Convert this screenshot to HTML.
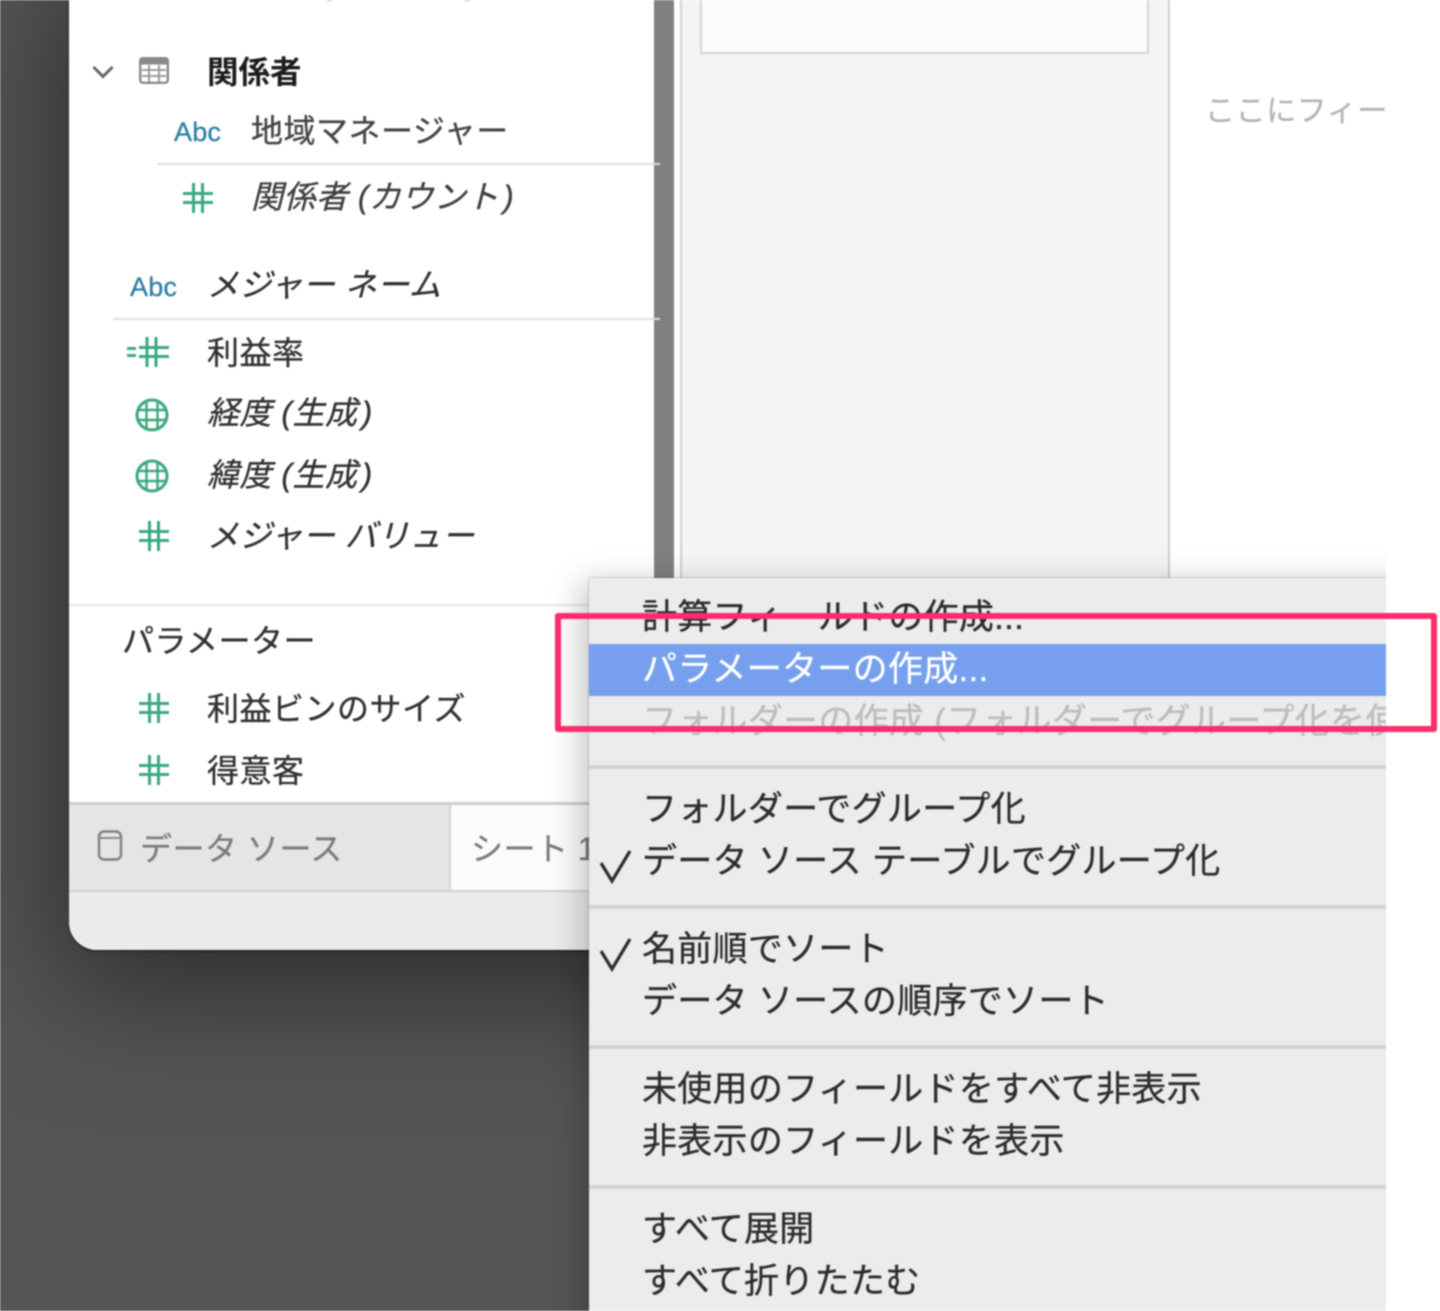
<!DOCTYPE html>
<html lang="ja"><head><meta charset="utf-8"><title>パラメーターの作成</title>
<style>
html,body{margin:0;padding:0;width:1440px;height:1311px;overflow:hidden;background:#fff}
#s{position:absolute;left:0;top:0;width:1440px;height:1311px;overflow:hidden;background:#555;filter:blur(.7px);font-family:"Liberation Sans","Noto Sans CJK JP",sans-serif}
.a{position:absolute}
.t{position:absolute;white-space:nowrap;height:44px;line-height:44px;font-size:32px;letter-spacing:.5px;color:#303030;-webkit-text-stroke:.3px currentColor}
.i{font-style:italic}
.i span{margin-left:4px}
.m{font-size:35px;letter-spacing:.28px;color:#2c2c2c;height:50px;line-height:50px;left:642px}
.sep{position:absolute;left:589px;width:797px;height:4px;background:#d2d2d2}
svg{position:absolute;overflow:visible}
</style></head><body>
<div id="s">
<div class="a" style="left:0;top:0;width:1440px;height:1311px;background:#555"></div>
<div class="a" style="left:69px;top:-40px;width:800px;height:990px;border-radius:0 0 0 28px;background:#fff;box-shadow:0 30px 160px 6px rgba(0,0,0,.5),0 1px 2px rgba(0,0,0,.7)"></div>
<div class="a" style="left:69px;top:0;width:1371px;height:802px;background:#fff"></div>
<div class="a" style="left:327px;top:0;width:5px;height:1px;background:#bbb"></div>
<div class="a" style="left:465px;top:0;width:5px;height:1px;background:#bbb"></div>

<div class="a" style="left:654px;top:0;width:20px;height:600px;background:#808080"></div>
<div class="a" style="left:680px;top:-2px;width:486px;height:600px;background:#f4f4f4;border:solid #cfcfcf;border-width:0 2px"></div>
<div class="a" style="left:700px;top:-2px;width:445px;height:52px;background:#fbfbfb;border:2px solid #d6d6d6"></div>
<div class="a" style="left:1190px;top:80px;width:196px;height:60px;overflow:hidden"><div class="t" style="left:15px;top:10px;font-size:30px;letter-spacing:.6px;color:#b4b4b4">ここにフィー</div></div>

<svg style="left:92px;top:65px" width="22" height="14" viewBox="0 0 22 14"><path d="M1.5 2 L11 11.5 L20.5 2" fill="none" stroke="#666" stroke-width="3"/></svg>
<svg style="left:139px;top:57px" width="30" height="27" viewBox="0 0 30 27"><rect x="1.2" y="1.2" width="27.6" height="24.6" rx="2.5" fill="#fff" stroke="#808080" stroke-width="2.2"/><rect x="1.5" y="1.5" width="27" height="6" fill="#8a8a8a"/><path d="M3 13H27M3 19H27M10 8V25M20 8V25" stroke="#9a9a9a" stroke-width="2"/></svg>
<div class="t" style="left:207px;top:50px;color:#1c1c1c;font-weight:700;font-size:31.5px;letter-spacing:0;-webkit-text-stroke:0">関係者</div>

<div class="t" style="left:174px;top:110px;font-size:27px;letter-spacing:.2px;color:#2b7ea6">Abc</div>
<div class="t" style="left:251px;top:109px;color:#444">地域マネージャー</div>
<div class="a" style="left:157px;top:163px;width:503px;height:2px;background:#dfdfdf"></div>
<svg style="left:183px;top:183px" width="30" height="30" viewBox="0 0 30 30"><path d="M10.5 0V30M19.5 0V30M0 10.5H30M0 19.5H30" fill="none" stroke="#3aa97f" stroke-width="3"/></svg>
<div class="t i" style="left:251px;top:175px;color:#3e3e3e">関係者 (カウント<span>)</span></div>

<div class="t" style="left:130px;top:265px;font-size:27px;letter-spacing:.2px;color:#2b7ea6">Abc</div>
<div class="t i" style="left:207px;top:263px">メジャー ネーム</div>
<div class="a" style="left:113px;top:318px;width:547px;height:2px;background:#dfdfdf"></div>

<svg style="left:127px;top:337px" width="42" height="30" viewBox="0 0 42 30"><path d="M0 11.5H9M0 18.5H9" stroke="#3aa97f" stroke-width="3"/><path d="M20 0V30M29 0V30M12 10.5H42M12 19.5H42" fill="none" stroke="#3aa97f" stroke-width="3"/></svg>
<div class="t" style="left:207px;top:331px">利益率</div>

<svg style="left:135px;top:398px" width="34" height="34" viewBox="0 0 34 34"><circle cx="17" cy="17" r="15" fill="none" stroke="#3aa97f" stroke-width="3"/><path d="M2 12H32M2 22H32M11.5 3V31M22.5 3V31" fill="none" stroke="#3aa97f" stroke-width="2.4"/></svg>
<div class="t i" style="left:207px;top:391px">経度 (生成<span>)</span></div>
<svg style="left:135px;top:459px" width="34" height="34" viewBox="0 0 34 34"><circle cx="17" cy="17" r="15" fill="none" stroke="#3aa97f" stroke-width="3"/><path d="M2 12H32M2 22H32M11.5 3V31M22.5 3V31" fill="none" stroke="#3aa97f" stroke-width="2.4"/></svg>
<div class="t i" style="left:207px;top:453px">緯度 (生成<span>)</span></div>
<svg style="left:139px;top:521px" width="30" height="30" viewBox="0 0 30 30"><path d="M10.5 0V30M19.5 0V30M0 10.5H30M0 19.5H30" fill="none" stroke="#3aa97f" stroke-width="3"/></svg>
<div class="t i" style="left:207px;top:514px">メジャー バリュー</div>

<div class="a" style="left:69px;top:604px;width:600px;height:2px;background:#e9e9e9"></div>
<div class="t" style="left:122px;top:619px">パラメーター</div>
<svg style="left:139px;top:693px" width="30" height="30" viewBox="0 0 30 30"><path d="M10.5 0V30M19.5 0V30M0 10.5H30M0 19.5H30" fill="none" stroke="#3aa97f" stroke-width="3"/></svg>
<div class="t" style="left:207px;top:687px">利益ビンのサイズ</div>
<svg style="left:139px;top:755px" width="30" height="30" viewBox="0 0 30 30"><path d="M10.5 0V30M19.5 0V30M0 10.5H30M0 19.5H30" fill="none" stroke="#3aa97f" stroke-width="3"/></svg>
<div class="t" style="left:207px;top:749px">得意客</div>

<div class="a" style="left:69px;top:802px;width:800px;height:148px;background:#ebebeb;border-radius:0 0 0 28px"></div>
<div class="a" style="left:69px;top:802px;width:800px;height:3px;background:#cfcfcf"></div>
<div class="a" style="left:69px;top:805px;width:381px;height:85px;background:#e5e5e5"></div>
<div class="a" style="left:449px;top:805px;width:2px;height:85px;background:#d4d4d4"></div>
<div class="a" style="left:451px;top:805px;width:420px;height:85px;background:#fbfbfb"></div>
<div class="a" style="left:69px;top:890px;width:800px;height:2px;background:#d2d2d2"></div>
<svg style="left:97px;top:830px" width="26" height="31" viewBox="0 0 26 31"><rect x="2" y="1.5" width="22" height="28" rx="5" fill="none" stroke="#808080" stroke-width="2.4"/><path d="M2 8H24" stroke="#8a8a8a" stroke-width="2"/></svg>
<div class="t" style="left:140px;top:827px;color:#7c7c7c">データ ソース</div>
<div class="t" style="left:471px;top:827px;color:#7c7c7c">シート 1</div>

<div class="a" style="left:589px;top:578px;width:900px;height:780px;background:#ececec;box-shadow:-6px 6px 30px 2px rgba(0,0,0,.22),0 0 2px rgba(0,0,0,.35)"></div>
<div class="a" style="left:589px;top:644px;width:797px;height:52px;background:#76a0ee"></div>

<div class="t m" style="top:593px">計算フィールドの作成...</div>
<div class="t m" style="top:645px;color:#fff">パラメーターの作成...</div>
<div class="a" style="left:589px;top:697px;width:797px;height:52px;overflow:hidden"><div class="t m" style="left:53px;top:0;color:#bdbdbd">フォルダーの作成 (フォルダーでグループ化を使用)</div></div>
<div class="sep" style="top:765px"></div>
<div class="t m" style="top:785px">フォルダーでグループ化</div>
<div class="t m" style="top:837px">データ ソース テーブルでグループ化</div>
<div class="sep" style="top:905px"></div>
<div class="t m" style="top:925px">名前順でソート</div>
<div class="t m" style="top:977px">データ ソースの順序でソート</div>
<div class="sep" style="top:1045px"></div>
<div class="t m" style="top:1065px">未使用のフィールドをすべて非表示</div>
<div class="t m" style="top:1117px">非表示のフィールドを表示</div>
<div class="sep" style="top:1185px"></div>
<div class="t m" style="top:1205px">すべて展開</div>
<div class="t m" style="top:1257px">すべて折りたたむ</div>
<svg style="left:598px;top:848px" width="36" height="36" viewBox="0 0 36 36"><path d="M3 15 L14 33 L32 3" fill="none" stroke="#2c2c2c" stroke-width="3.2"/></svg>
<svg style="left:598px;top:936px" width="36" height="36" viewBox="0 0 36 36"><path d="M3 15 L14 33 L32 3" fill="none" stroke="#2c2c2c" stroke-width="3.2"/></svg>

<div class="a" style="left:1386px;top:0;width:54px;height:1311px;background:#fff"></div>
<div class="a" style="left:555px;top:613px;width:870px;height:107px;border:6px solid #fb2d6c;border-radius:3px"></div>
</div>
</body></html>
